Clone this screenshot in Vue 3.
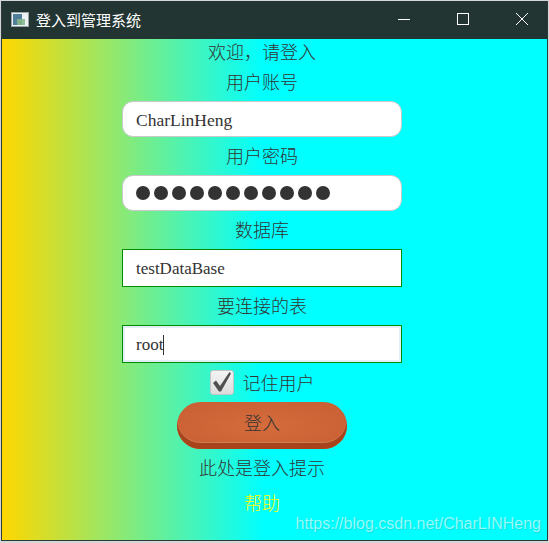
<template>
  <div class="desktop">
    <div class="window">
      <div class="titlebar">
        <svg class="app-icon" width="18" height="15" viewBox="0 0 18 15">
          <rect x="0.5" y="0.5" width="17" height="14" fill="#eef1f3" stroke="#9aa5a8" />
          <rect x="2" y="2" width="9" height="11" fill="#4f7f9a" />
          <rect x="6" y="7" width="5" height="6" fill="#7fb08a" />
          <rect x="11" y="7" width="3" height="6" fill="#8fbf9a" />
        </svg>
        <span class="title">登入到管理系统</span>
        <div class="controls">
          <button class="ctl">
            <svg width="14" height="14" viewBox="0 0 14 14"><path d="M1 7.5H13" stroke="#fff" /></svg>
          </button>
          <button class="ctl">
            <svg width="14" height="14" viewBox="0 0 14 14"><rect x="1.5" y="1.5" width="11" height="11" fill="none" stroke="#fff" /></svg>
          </button>
          <button class="ctl">
            <svg width="14" height="14" viewBox="0 0 14 14"><path d="M1 1L13 13M13 1L1 13" stroke="#fff" /></svg>
          </button>
        </div>
      </div>

      <div class="content">
        <div class="label welcome">欢迎，请登入</div>
        <div class="label">用户账号</div>
        <div class="field round user">CharLinHeng</div>
        <div class="label">用户密码</div>
        <div class="field round dots">
          <span v-for="n in 11" :key="n" class="dot"></span>
        </div>
        <div class="label">数据库</div>
        <div class="field square">testDataBase</div>
        <div class="label">要连接的表</div>
        <div class="field square focused">root<span class="caret"></span></div>

        <div class="remember">
          <span class="checkbox">
            <svg width="22" height="22" viewBox="0 0 22 22">
              <path d="M2 12L5 9.5L9 15L18.5 1L20 2.5L10 20.5H8Z" fill="#4f4f4f" />
            </svg>
          </span>
          <span class="label">记住用户</span>
        </div>

        <button class="login">登入</button>
        <div class="label hint">此处是登入提示</div>
        <div class="label help">帮助</div>
        <div class="watermark">https://blog.csdn.net/CharLINHeng</div>
      </div>
    </div>
  </div>
</template>

<script setup>
</script>

<style>
html, body { margin: 0; background: #d4d4d4; overflow: hidden; }
</style>

<style scoped>
.desktop {
  width: 549px;
  height: 543px;
  box-sizing: border-box;
  padding: 1px 1px 2px 1px;
  background: #d6d6d6;
  font-family: "Noto Sans CJK SC", "Liberation Sans", sans-serif;
}
.window {
  height: 100%;
  box-sizing: border-box;
  display: flex;
  flex-direction: column;
  border: 1px solid #2a3a38;
  border-top: none;
  background: #223533;
}
.titlebar {
  height: 38px;
  box-sizing: border-box;
  flex: none;
  display: flex;
  align-items: center;
  color: #fff;
  background: #223533;
  padding: 0 0 2px 9px;
}
.title { margin-left: 7px; font-size: 15px; }
.controls { margin-left: auto; margin-right: -4px; display: flex; }
.ctl {
  width: 59px;
  height: 36px;
  padding: 0;
  border: none;
  background: none;
  display: flex;
  align-items: center;
  justify-content: center;
}
.content {
  flex: 1;
  position: relative;
  display: flex;
  flex-direction: column;
  align-items: center;
  padding-right: 25px;
  background: linear-gradient(90deg, #ffd700, #00ffff 48%);
}
.label {
  font-size: 18px;
  line-height: 24px;
  color: #333;
  font-weight: 300;
}
.content > .label:nth-child(2) { margin-top: 6px; }
.field {
  width: 280px;
  box-sizing: border-box;
  background: #fff;
  font-family: "Liberation Serif", serif;
  font-size: 18px;
  color: #333;
  display: flex;
  align-items: center;
  padding-left: 13px;
}
.round {
  height: 36px;
  margin: 8px 0 6px;
  border: 1px solid #c9c9c9;
  border-radius: 11px;
}
.user {
  padding-top: 3px;
  font-size: 17.5px;
}
.square {
  height: 38px;
  margin: 8px 0 6px;
  padding-top: 1px;
  border: 1px solid #008a00;
  font-size: 17px;
}
.focused { box-shadow: inset 0 0 0 2px #e2eff9; }
.caret { width: 1px; height: 20px; background: #333; }
.dots { gap: 4px; margin-top: 8px; }
.dot { width: 14px; height: 14px; border-radius: 50%; background: #333; }
.remember {
  display: flex;
  align-items: center;
  gap: 9px;
  height: 26px;
}
.checkbox {
  width: 24px;
  height: 25px;
  box-sizing: border-box;
  border: 1px solid #c4c4c4;
  border-radius: 3px;
  background: linear-gradient(#f4f4f4, #dcdcdc);
  display: flex;
  align-items: center;
  justify-content: center;
}
.login {
  width: 170px;
  height: 47px;
  margin-top: 7px;
  border: none;
  border-radius: 24px;
  padding: 0 0 8px;
  font-family: inherit;
  font-size: 18px;
  font-weight: 300;
  color: #333;
  background: radial-gradient(ellipse at center, #d46c3c, #c85e33);
  box-shadow: inset 0 -6px 0 #a8441c, inset 0 -7px 0 #d07a52;
}
.hint { margin-top: 6px; }
.help { margin-top: 11px; color: #ffff00; }
.watermark {
  position: absolute;
  right: 6px;
  bottom: 7px;
  font-family: "Liberation Sans", sans-serif;
  font-size: 16px;
  color: rgba(255, 255, 255, 0.6);
  text-shadow: 1px 1px 1px rgba(0, 0, 0, 0.12);
}
</style>
